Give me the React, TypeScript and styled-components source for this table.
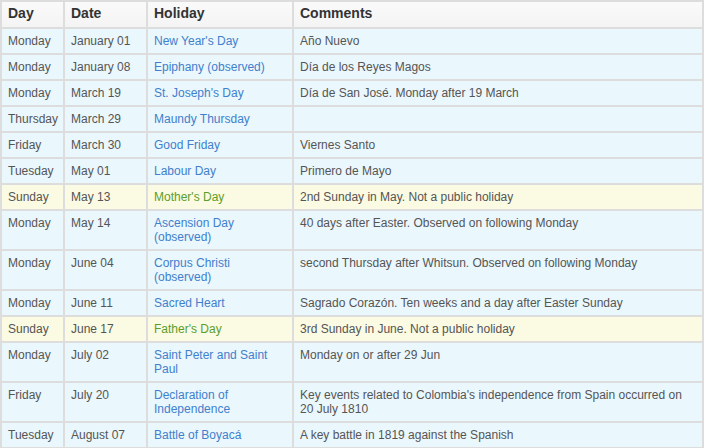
import React from "react";
import styled, { createGlobalStyle } from "styled-components";

const GlobalStyle = createGlobalStyle`
  html, body {
    margin: 0;
    padding: 0;
    background: #ffffff;
  }
  body {
    font-family: "Liberation Sans", Arial, sans-serif;
  }
`;

const Table = styled.table`
  width: 702px;
  border-collapse: collapse;
  table-layout: fixed;
  font-family: "Liberation Sans", Arial, sans-serif;
`;

const HeadCell = styled.th<{ $width: number }>`
  width: ${(p) => p.$width}px;
  height: 27px;
  padding: 3px 6px 0;
  box-sizing: border-box;
  border: 2px solid #dddddd;
  background: linear-gradient(#fafafa, #f4f4f4);
  color: #333333;
  font-size: 14px;
  line-height: 16px;
  font-weight: bold;
  text-align: left;
  vertical-align: top;
`;

const Row = styled.tr<{ $sunday?: boolean }>`
  background: ${(p) => (p.$sunday ? "#fbfae2" : "#eaf7fd")};
`;

const Cell = styled.td`
  padding: 5px 6px;
  border: 2px solid #dddddd;
  color: #555555;
  font-size: 12px;
  line-height: 14px;
  vertical-align: top;
`;

const HolidayLink = styled.a<{ $sunday?: boolean }>`
  color: ${(p) => (p.$sunday ? "#5b9e2c" : "#4180cc")};
  text-decoration: none;
`;

type Holiday = {
  day: string;
  date: string;
  name: string;
  comment: string;
};

const holidays: Holiday[] = [
  { day: "Monday", date: "January 01", name: "New Year's Day", comment: "Año Nuevo" },
  { day: "Monday", date: "January 08", name: "Epiphany (observed)", comment: "Día de los Reyes Magos" },
  { day: "Monday", date: "March 19", name: "St. Joseph's Day", comment: "Día de San José. Monday after 19 March" },
  { day: "Thursday", date: "March 29", name: "Maundy Thursday", comment: "" },
  { day: "Friday", date: "March 30", name: "Good Friday", comment: "Viernes Santo" },
  { day: "Tuesday", date: "May 01", name: "Labour Day", comment: "Primero de Mayo" },
  { day: "Sunday", date: "May 13", name: "Mother's Day", comment: "2nd Sunday in May. Not a public holiday" },
  { day: "Monday", date: "May 14", name: "Ascension Day (observed)", comment: "40 days after Easter. Observed on following Monday" },
  { day: "Monday", date: "June 04", name: "Corpus Christi (observed)", comment: "second Thursday after Whitsun. Observed on following Monday" },
  { day: "Monday", date: "June 11", name: "Sacred Heart", comment: "Sagrado Corazón. Ten weeks and a day after Easter Sunday" },
  { day: "Sunday", date: "June 17", name: "Father's Day", comment: "3rd Sunday in June. Not a public holiday" },
  { day: "Monday", date: "July 02", name: "Saint Peter and Saint Paul", comment: "Monday on or after 29 Jun" },
  {
    day: "Friday",
    date: "July 20",
    name: "Declaration of Independence",
    comment: "Key events related to Colombia's independence from Spain occurred on 20 July 1810",
  },
  { day: "Tuesday", date: "August 07", name: "Battle of Boyacá", comment: "A key battle in 1819 against the Spanish" },
];

const App = () => (
  <>
    <GlobalStyle />
    <Table>
      <thead>
        <tr>
          <HeadCell $width={63}>Day</HeadCell>
          <HeadCell $width={83}>Date</HeadCell>
          <HeadCell $width={146}>Holiday</HeadCell>
          <HeadCell $width={410}>Comments</HeadCell>
        </tr>
      </thead>
      <tbody>
        {holidays.map((h) => {
          const sunday = h.day === "Sunday";
          return (
            <Row key={h.date} $sunday={sunday}>
              <Cell>{h.day}</Cell>
              <Cell>{h.date}</Cell>
              <Cell>
                <HolidayLink href="#" $sunday={sunday}>
                  {h.name}
                </HolidayLink>
              </Cell>
              <Cell>{h.comment}</Cell>
            </Row>
          );
        })}
      </tbody>
    </Table>
  </>
);

export default App;
